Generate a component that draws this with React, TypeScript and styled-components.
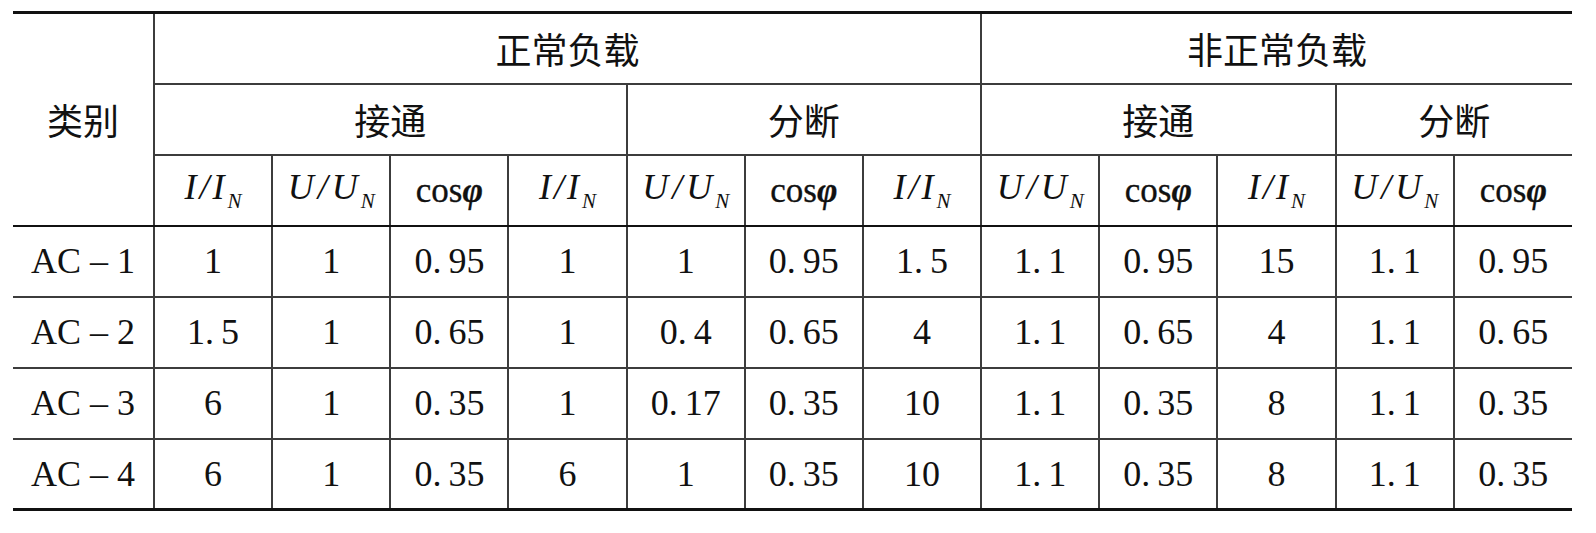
import React from "react";
import styled, { createGlobalStyle } from "styled-components";

const GlobalStyle = createGlobalStyle`
  html, body { margin: 0; padding: 0; background: #ffffff; }
`;

const Wrapper = styled.div`
  padding: 11px 0 0 13px;
`;

const Table = styled.table`
  border-collapse: collapse;
  table-layout: fixed;
  width: 1559px;
  font-family: "Liberation Serif", "Noto Sans CJK SC", serif;
  color: #111;
  border-top: 3px solid #111;
  border-bottom: 3px solid #111;
  border-left: hidden;
  border-right: hidden;
`;

const Row = styled.tr`
  height: 71px;
`;

const Cell = styled.td<{ $strong?: boolean; $cjk?: boolean }>`
  padding: 0;
  text-align: center;
  vertical-align: middle;
  font-family: "Liberation Serif", "Noto Sans CJK SC", serif;
  font-size: 36px;
  font-weight: 400;
  line-height: 1;
  border: 2px solid #3c3c3c;
  ${(p) => (p.$strong ? "border-bottom: 2px solid #111;" : "")}
  ${(p) =>
    p.$cjk
      ? `font-family: "Noto Sans CJK SC", "Liberation Serif", sans-serif; font-size: 36px;`
      : ""}
  white-space: nowrap;
`;

const Ratio = styled.span`
  font-style: italic;
  font-size: 36px;
`;

const Slash = styled.span<{ $wide?: boolean }>`
  font-style: italic;
  margin: ${(p) => (p.$wide ? "0 4px" : "0 3px")};
`;

const Sub = styled.sub`
  font-style: italic;
  font-size: 21px;
  vertical-align: -9px;
  margin-left: 3px;
`;

const Cos = styled.span`
  font-size: 35px;
  -webkit-text-stroke: 0.3px #111;
`;

const Phi = styled.span`
  font-style: italic;
  font-weight: 700;
`;

const Dot = styled.span`
  margin-right: 7px;
`;

const Dash = styled.span`
  margin: 0 9px 0 9px;
`;

const Col = styled.col<{ $w: number }>`
  width: ${(p) => p.$w}px;
`;

const IRatio = () => (
  <Ratio>
    I<Slash>/</Slash>I<Sub>N</Sub>
  </Ratio>
);

const URatio = () => (
  <Ratio>
    U<Slash $wide>/</Slash>U<Sub>N</Sub>
  </Ratio>
);

const CosPhi = () => (
  <Cos>
    cos<Phi>φ</Phi>
  </Cos>
);

const Num = ({ v }: { v: string }) => {
  const parts = v.split(".");
  if (parts.length === 1) return <>{v}</>;
  return (
    <>
      {parts[0]}
      <Dot>.</Dot>
      {parts[1]}
    </>
  );
};

const rows: { name: string; values: string[] }[] = [
  { name: "1", values: ["1", "1", "0.95", "1", "1", "0.95", "1.5", "1.1", "0.95", "15", "1.1", "0.95"] },
  { name: "2", values: ["1.5", "1", "0.65", "1", "0.4", "0.65", "4", "1.1", "0.65", "4", "1.1", "0.65"] },
  { name: "3", values: ["6", "1", "0.35", "1", "0.17", "0.35", "10", "1.1", "0.35", "8", "1.1", "0.35"] },
  { name: "4", values: ["6", "1", "0.35", "6", "1", "0.35", "10", "1.1", "0.35", "8", "1.1", "0.35"] },
];

const subHeads = [0, 1, 2, 0, 1, 2, 0, 1, 2, 0, 1, 2];

export default function App() {
  return (
    <>
      <GlobalStyle />
      <Wrapper>
        <Table>
          <colgroup>
            <Col $w={141} />
            {Array.from({ length: 12 }).map((_, i) => (
              <Col key={i} $w={118.17} />
            ))}
          </colgroup>
          <thead>
            <Row>
              <Cell as="th" rowSpan={3} $cjk $strong>
                类别
              </Cell>
              <Cell as="th" colSpan={7} $cjk>
                正常负载
              </Cell>
              <Cell as="th" colSpan={5} $cjk>
                非正常负载
              </Cell>
            </Row>
            <Row>
              <Cell as="th" colSpan={4} $cjk>
                接通
              </Cell>
              <Cell as="th" colSpan={3} $cjk>
                分断
              </Cell>
              <Cell as="th" colSpan={3} $cjk>
                接通
              </Cell>
              <Cell as="th" colSpan={2} $cjk>
                分断
              </Cell>
            </Row>
            <Row>
              {subHeads.map((k, i) => (
                <Cell as="th" key={i} $strong>
                  {k === 0 ? <IRatio /> : k === 1 ? <URatio /> : <CosPhi />}
                </Cell>
              ))}
            </Row>
          </thead>
          <tbody>
            {rows.map((r) => (
              <Row key={r.name}>
                <Cell>
                  AC<Dash>–</Dash>
                  {r.name}
                </Cell>
                {r.values.map((v, i) => (
                  <Cell key={i}>
                    <Num v={v} />
                  </Cell>
                ))}
              </Row>
            ))}
          </tbody>
        </Table>
      </Wrapper>
    </>
  );
}
